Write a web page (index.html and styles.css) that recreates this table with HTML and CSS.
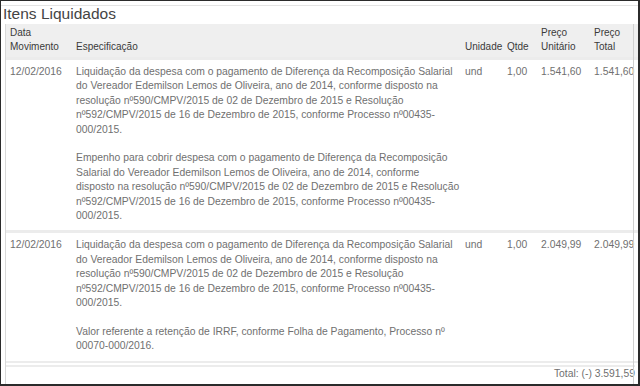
FILE: index.html
```html
<!DOCTYPE html>
<html lang="pt-BR">
<head>
<meta charset="utf-8">
<title>Itens Liquidados</title>
<link rel="stylesheet" href="styles.css">
</head>
<body>
<div class="frame">
  <div class="panel">
    <h2 class="panel-title">Itens Liquidados</h2>
    <div class="table-wrap">
      <table class="items">
        <colgroup>
          <col class="col-date">
          <col class="col-spec">
          <col class="col-unit">
          <col class="col-qty">
          <col class="col-price">
          <col class="col-total">
        </colgroup>
        <thead>
          <tr>
            <th>Data Movimento</th>
            <th>Especificação</th>
            <th>Unidade</th>
            <th>Qtde</th>
            <th>Preço Unitário</th>
            <th>Preço Total</th>
          </tr>
        </thead>
        <tbody>
          <tr>
            <td>12/02/2016</td>
            <td class="spec">
              <p>Liquidação da despesa com o pagamento de Diferença da Recomposição Salarial<br>do Vereador Edemilson Lemos de Oliveira, ano de 2014, conforme disposto na<br>resolução nº590/CMPV/2015 de 02 de Dezembro de 2015 e Resolução<br>nº592/CMPV/2015 de 16 de Dezembro de 2015, conforme Processo nº00435-<br>000/2015.</p>
              <p>Empenho para cobrir despesa com o pagamento de Diferença da Recomposição<br>Salarial do Vereador Edemilson Lemos de Oliveira, ano de 2014, conforme<br>disposto na resolução nº590/CMPV/2015 de 02 de Dezembro de 2015 e Resolução<br>nº592/CMPV/2015 de 16 de Dezembro de 2015, conforme Processo nº00435-<br>000/2015.</p>
            </td>
            <td>und</td>
            <td>1,00</td>
            <td>1.541,60</td>
            <td>1.541,60</td>
          </tr>
          <tr>
            <td>12/02/2016</td>
            <td class="spec">
              <p>Liquidação da despesa com o pagamento de Diferença da Recomposição Salarial<br>do Vereador Edemilson Lemos de Oliveira, ano de 2014, conforme disposto na<br>resolução nº590/CMPV/2015 de 02 de Dezembro de 2015 e Resolução<br>nº592/CMPV/2015 de 16 de Dezembro de 2015, conforme Processo nº00435-<br>000/2015.</p>
              <p>Valor referente a retenção de IRRF, conforme Folha de Pagamento, Processo nº<br>00070-000/2016.</p>
            </td>
            <td>und</td>
            <td>1,00</td>
            <td>2.049,99</td>
            <td>2.049,99</td>
          </tr>
        </tbody>
      </table>
      <div class="total">Total: (-) 3.591,59</div>
    </div>
  </div>
</div>
</body>
</html>
```
FILE: styles.css
```css
* {
  box-sizing: border-box;
}

html,
body {
  margin: 0;
  padding: 0;
  background: #fff;
}

body {
  font-family: "Liberation Sans", Arial, sans-serif;
  color: #707070;
  overflow: hidden;
}

.frame {
  width: 640px;
  height: 386px;
  border-style: solid;
  border-color: #2b2b2b;
  border-width: 1px 2px 2px 1px;
  overflow: hidden;
  display: flex;
  flex-direction: column;
}

.panel {
  flex: 1;
  display: flex;
  flex-direction: column;
  margin-top: 4px;
  border-top: 1px solid #e4e4e4;
}

.panel-title {
  margin: 0 0 2px 2px;
  font-size: 15.5px;
  line-height: 16px;
  font-weight: normal;
  color: #444;
}

.table-wrap {
  position: relative;
  flex: 1;
  margin-left: 4px;
  width: 629px;
  border-left: 1px solid #d8d8d8;
}

.table-wrap::after {
  content: "";
  position: absolute;
  top: 0;
  bottom: 0;
  right: 0;
  width: 1px;
  background: #d0d0d0;
}

.items {
  width: 634px;
  table-layout: fixed;
  border-collapse: collapse;
  border-bottom: 2px solid #ececec;
}

.col-date { width: 66px; }
.col-spec { width: 389px; }
.col-unit { width: 42px; }
.col-qty { width: 34px; }
.col-price { width: 53px; }
.col-total { width: 50px; }

.items th {
  background: #efefef;
  padding: 2px 0 4px 4px;
  border-bottom: 2px solid #fff;
  font-size: 10px;
  line-height: 13.5px;
  font-weight: normal;
  color: #3a3a3a;
  text-align: left;
  vertical-align: bottom;
}

.items td {
  padding: 5px 0 7px 4px;
  border-top: 3px solid #ececec;
  font-size: 10.35px;
  line-height: 14.4px;
  vertical-align: top;
  white-space: nowrap;
}

.items .spec p {
  margin: 0;
}

.items .spec p + p {
  margin-top: 14.4px;
}

.total {
  margin-top: 2px;
  margin-right: -1px;
  border-top: 2px solid #ececec;
  text-align: right;
  font-size: 10.35px;
  line-height: 14px;
}
```
